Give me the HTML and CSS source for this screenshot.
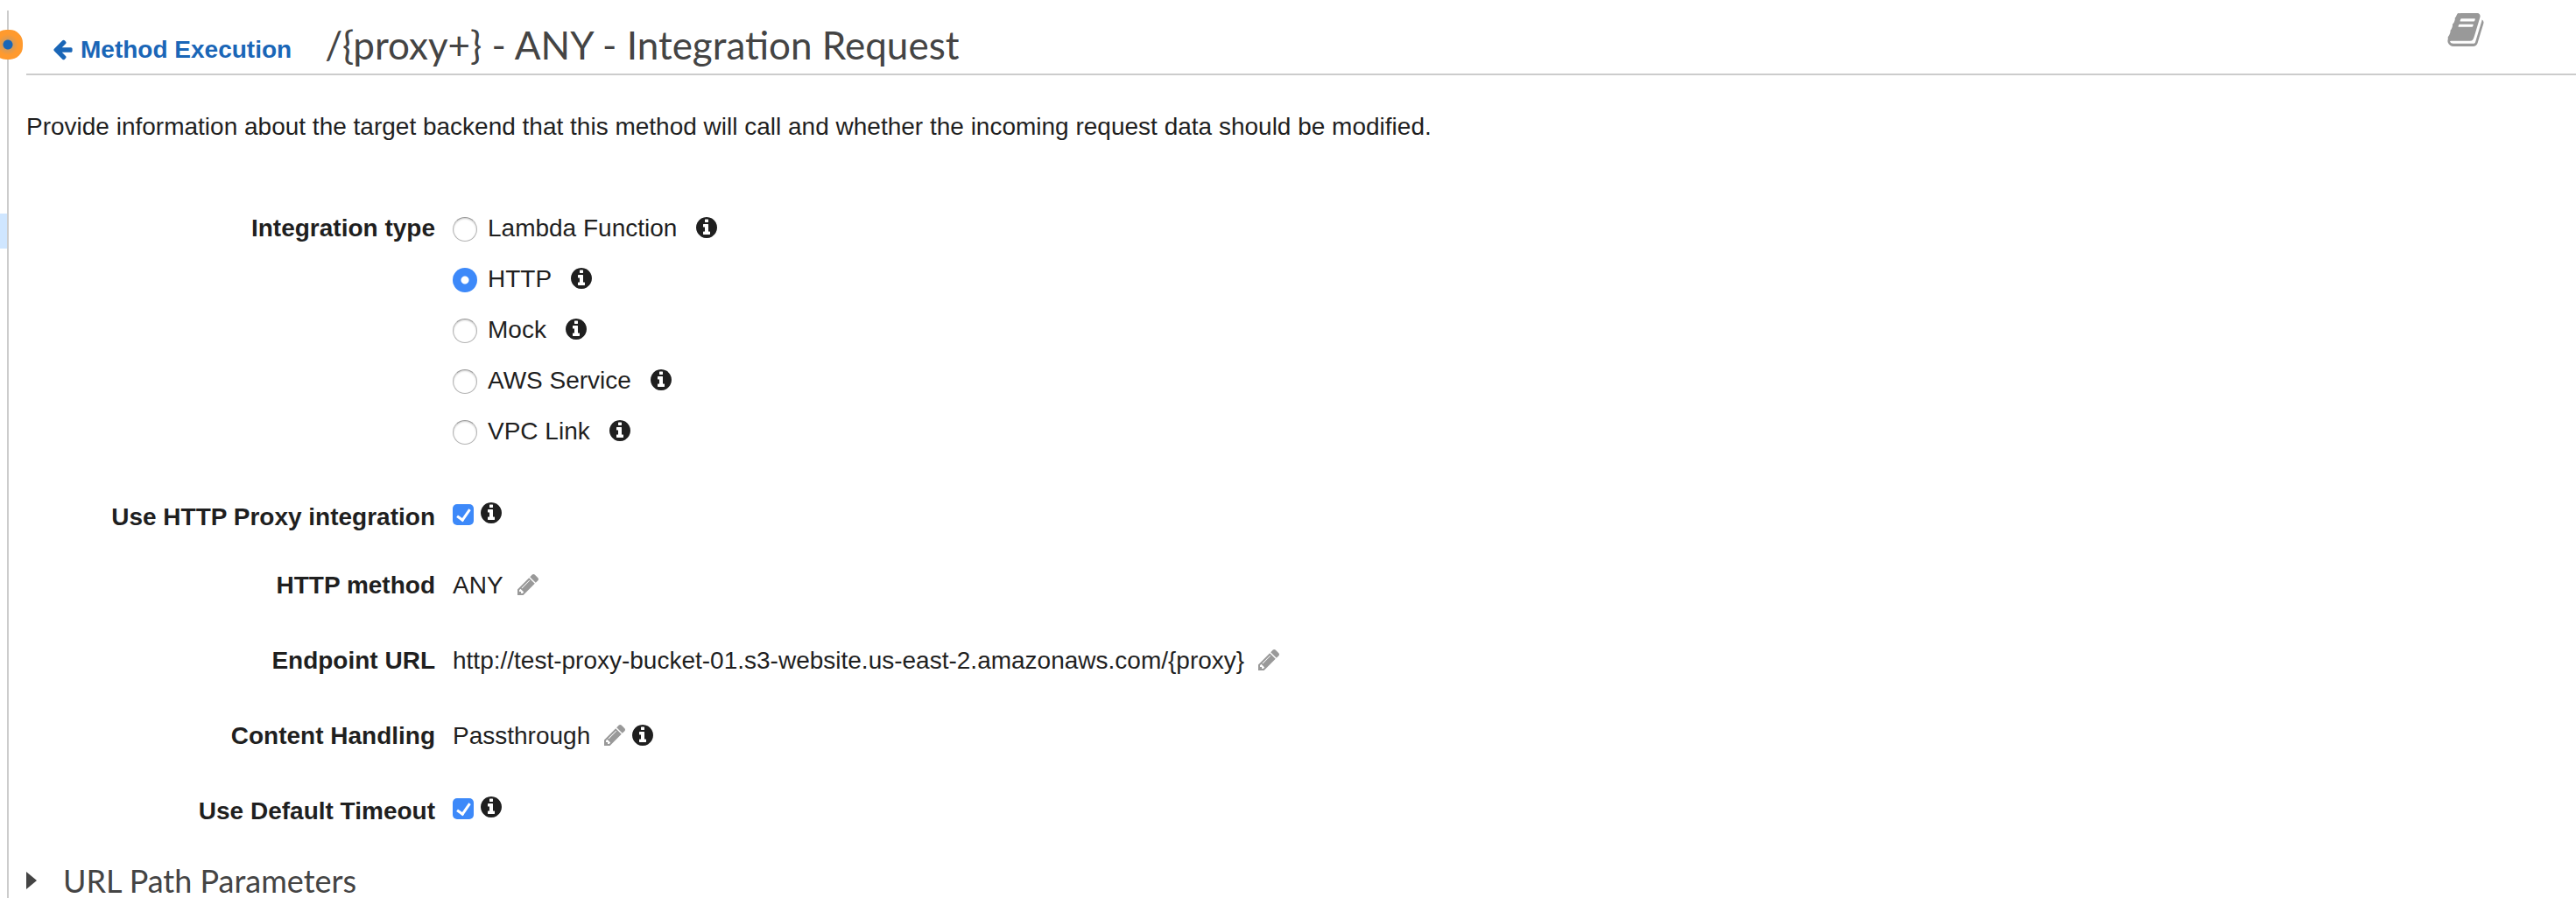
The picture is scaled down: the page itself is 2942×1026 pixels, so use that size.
FILE: index.html
```html
<!DOCTYPE html>
<html lang="en">
<head>
    <meta charset="utf-8">
    <title>Integration Request</title>
    <meta name="viewport" content="width=device-width, initial-scale=1.0">
    <link rel="stylesheet" href="styles.css">
</head>
<body>
    <!-- shared icons -->
    <svg class="sprite" aria-hidden="true">
        <symbol id="info" viewBox="128 128 1536 1536">
            <path d="M1152 1376v-160q0-14-9-23t-23-9h-96v-512q0-14-9-23t-23-9h-320q-14 0-23 9t-9 23v160q0 14 9 23t23 9h96v320h-96q-14 0-23 9t-9 23v160q0 14 9 23t23 9h448q14 0 23-9t9-23zm-128-896v-160q0-14-9-23t-23-9h-192q-14 0-23 9t-9 23v160q0 14 9 23t23 9h192q14 0 23-9t9-23zm640 416q0 209-103 385.5t-279.5 279.5-385.5 103-385.5-103-279.5-279.5-103-385.5 103-385.5 279.5-279.5 385.5-103 385.5 103 279.5 279.5 103 385.5z"/>
        </symbol>
        <symbol id="pencil" viewBox="128 149 1515 1515">
            <path d="M491 1536l91-91-235-235-91 91v107h128v128h107zm523-928q0-22-22-22-10 0-17 7l-542 542q-7 7-7 17 0 22 22 22 10 0 17-7l542-542q7-7 7-17zm-54-192l416 416-832 832h-416v-416zm683 96q0 53-37 90l-166 166-416-416 166-165q36-38 90-38 53 0 91 38l235 234q37 39 37 91z"/>
        </symbol>
    </svg>

    <aside class="sidebar">
        <div class="selected-resource"></div>
        <div class="resize-handle"></div>
    </aside>

    <main class="content">
        <header class="page-header">
            <a class="back-link" href="#">
                <svg class="icon" viewBox="160 128 1536 1664" aria-hidden="true"><path d="M1664 896v128q0 53-32.500 90.500t-84.500 37.500h-704l293 294q38 36 38 90t-38 90l-75 76q-37 37-90 37-52 0-91-37l-651-652q-37-37-37-90 0-52 37-91l651-650q38-38 91-38 52 0 90 38l75 74q38 38 38 91t-38 91l-293 293h704q52 0 84.500 37.500t32.500 90.500z"/></svg>
                Method Execution
            </a>
            <h1>/{proxy+} - ANY - Integration Request</h1>
            <button class="docs-btn" type="button" aria-label="Documentation">
                <svg viewBox="64 128 1666 1536"><path d="M1703 478q40 57 18 129l-275 906q-19 64-76.500 107.500t-122.500 43.500h-923q-77 0-148.500-53.500t-99.500-131.500q-24-67-2-127 0-4 3-27t4-37q1-8-3-21.500t-3-19.500q2-11 8-21t16.500-23.500 16.500-23.500q23-38 45-91.500t30-91.500q3-10 .5-30t-.5-28q3-11 17-28t17-23q21-36 42-92t25-90q1-9-2.500-32t.5-28q4-13 22-30.500t22-22.500q19-26 42.500-84.500t27.500-96.500q1-8-3-25.500t-2-26.500q2-8 9-18t18-23 17-21q8-12 16.500-30.500t15-35 16-36 19.500-32 26.500-23.500 36-11.500 47.500 5.500l-1 3q38-9 51-9h761q74 0 114 56t18 130l-274 906q-36 119-71.500 153.500t-128.500 34.500h-869q-27 0-38 15-11 16-1 43 24 70 144 70h923q29 0 56-15.500t35-41.500l300-987q7-22 5-57 38 15 59 43zm-1064 2q-4 13 2 22.500t20 9.500h608q13 0 25.500-9.500t16.500-22.500l21-64q4-13-2-22.500t-20-9.500h-608q-13 0-25.500 9.500t-16.500 22.500zm-83 256q-4 13 2 22.500t20 9.500h608q13 0 25.500-9.500t16.500-22.500l21-64q4-13-2-22.500t-20-9.500h-608q-13 0-25.500 9.500t-16.500 22.500z"/></svg>
            </button>
        </header>

        <p class="intro">Provide information about the target backend that this method will call and whether the incoming request data should be modified.</p>

        <form class="settings">
            <div class="row type-row" role="radiogroup" aria-labelledby="typeLabel">
                <span class="label" id="typeLabel">Integration type</span>
                <div class="options">
                    <div class="option">
                        <input type="radio" name="type" id="lambda">
                        <label for="lambda">Lambda Function</label>
                        <svg class="icon"><use href="#info"/></svg>
                    </div>
                    <div class="option">
                        <input type="radio" name="type" id="http" checked>
                        <label for="http">HTTP</label>
                        <svg class="icon"><use href="#info"/></svg>
                    </div>
                    <div class="option">
                        <input type="radio" name="type" id="mock">
                        <label for="mock">Mock</label>
                        <svg class="icon"><use href="#info"/></svg>
                    </div>
                    <div class="option">
                        <input type="radio" name="type" id="aws">
                        <label for="aws">AWS Service</label>
                        <svg class="icon"><use href="#info"/></svg>
                    </div>
                    <div class="option">
                        <input type="radio" name="type" id="vpc">
                        <label for="vpc">VPC Link</label>
                        <svg class="icon"><use href="#info"/></svg>
                    </div>
                </div>
            </div>

            <div class="row proxy-row">
                <label class="label" for="useProxy">Use HTTP Proxy integration</label>
                <div class="check">
                    <input type="checkbox" id="useProxy" checked>
                    <svg class="icon"><use href="#info"/></svg>
                </div>
            </div>

            <div class="row">
                <span class="label">HTTP method</span>
                <div class="value">
                    <span>ANY</span>
                    <button class="edit-btn" type="button" aria-label="Edit HTTP method"><svg class="icon"><use href="#pencil"/></svg></button>
                </div>
            </div>

            <div class="row">
                <span class="label">Endpoint URL</span>
                <div class="value">
                    <span>http://test-proxy-bucket-01.s3-website.us-east-2.amazonaws.com/{proxy}</span>
                    <button class="edit-btn" type="button" aria-label="Edit endpoint URL"><svg class="icon"><use href="#pencil"/></svg></button>
                </div>
            </div>

            <div class="row">
                <span class="label">Content Handling</span>
                <div class="value">
                    <span>Passthrough</span>
                    <button class="edit-btn" type="button" aria-label="Edit content handling"><svg class="icon"><use href="#pencil"/></svg></button>
                    <svg class="icon"><use href="#info"/></svg>
                </div>
            </div>

            <div class="row timeout-row">
                <label class="label" for="useTimeout">Use Default Timeout</label>
                <div class="check">
                    <input type="checkbox" id="useTimeout" checked>
                    <svg class="icon"><use href="#info"/></svg>
                </div>
            </div>
        </form>

        <button class="section-toggle" type="button" aria-expanded="false">
            <span class="caret"></span>
            URL Path Parameters
        </button>
    </main>
</body>
</html>
```
FILE: styles.css
```css
:root {
    --text: #1f1f1f;
    --heading: #444;
    --link: #1a66b7;
    --border: #ccc;
    --muted: #999;
    --control: #3d89f9;
    --selected: #cfe6ff;
    --handle: #ff9a2e;
}

* {
    margin: 0;
    padding: 0;
    box-sizing: border-box;
}

body {
    display: flex;
    min-height: 100vh;
    padding-top: 12px;
    background: #fff;
    color: var(--text);
    font-family: "Liberation Sans", Arial, sans-serif;
    font-size: 28px;
    line-height: 36px;
}

button {
    border: none;
    background: none;
    color: inherit;
    cursor: pointer;
}

.sprite {
    position: absolute;
    width: 0;
    height: 0;
}

.icon {
    display: block;
    flex: none;
    width: 24px;
    height: 24px;
    fill: currentColor;
}

/* edge of the resource tree */
.sidebar {
    position: relative;
    flex: none;
    width: 10px;
    padding-top: 232px;
    border-right: 2px solid var(--border);
}

.selected-resource {
    height: 40px;
    background: var(--selected);
}

.resize-handle {
    position: absolute;
    top: 22px;
    left: -8px;
    width: 34px;
    height: 34px;
    border-radius: 15px;
    background: radial-gradient(circle, var(--link) 5px, #d99a55 6px, var(--handle) 12px);
}

.content {
    flex: 1;
    min-width: 0;
    padding-left: 20px;
}

.page-header {
    display: flex;
    align-items: flex-start;
    height: 74px;
    padding-left: 30px;
    border-bottom: 2px solid var(--border);
}

.back-link {
    display: flex;
    align-items: center;
    gap: 8px;
    margin-top: 27px;
    color: var(--link);
    font-weight: bold;
    text-decoration: none;
}

h1 {
    margin-left: 38px;
    color: var(--heading);
    font-family: Lato, sans-serif;
    font-size: 44px;
    font-weight: 400;
    line-height: 78px;
}

.docs-btn {
    width: 42px;
    height: 38px;
    margin: 3px 105px 0 auto;
}

.docs-btn svg {
    display: block;
    width: 100%;
    height: 100%;
    fill: var(--muted);
}

.intro {
    margin-top: 41px;
}

.settings {
    margin-top: 80px;
}

.row {
    display: flex;
    align-items: flex-start;
    gap: 20px;
    margin-bottom: 50px;
}

.type-row {
    margin-bottom: 64px;
}

.proxy-row {
    margin-bottom: 42px;
}

.timeout-row {
    margin-bottom: 40px;
}

.label {
    flex: none;
    width: 467px;
    font-weight: bold;
    text-align: right;
}

.options {
    display: flex;
    flex-direction: column;
    gap: 24px;
}

.option,
.value {
    display: flex;
    align-items: center;
    height: 34px;
}

.option label,
.value span {
    padding-top: 2px;
}

.option label {
    margin: 0 22px 0 12px;
}

.value {
    gap: 8px;
}

.edit-btn {
    margin-left: 8px;
    color: var(--muted);
}

.check {
    display: flex;
    align-items: center;
    gap: 8px;
    height: 26px;
}

input {
    appearance: none;
    flex: none;
    margin-top: 4px;
}

input[type="radio"] {
    width: 28px;
    height: 28px;
    border: 1px solid #b4b4b4;
    border-top-color: #999;
    border-radius: 50%;
    background: #fff;
    box-shadow: inset 0 1px 2px rgba(0, 0, 0, 0.2);
}

input[type="radio"]:checked {
    border: none;
    background: radial-gradient(circle, #fff 4px, var(--control) 5px);
    box-shadow: none;
}

input[type="checkbox"] {
    position: relative;
    width: 24px;
    height: 24px;
    border-radius: 5px;
    background: var(--control);
}

input[type="checkbox"]:checked::after {
    content: "";
    position: absolute;
    top: 3px;
    left: 8px;
    box-sizing: border-box;
    width: 9px;
    height: 16px;
    border: solid #fff;
    border-width: 0 3px 3px 0;
    transform: rotate(35deg);
}

.section-toggle {
    display: flex;
    align-items: center;
    gap: 30px;
    color: var(--heading);
    font-family: Lato, sans-serif;
    font-size: 36px;
    line-height: 42px;
}

.caret {
    border: solid transparent;
    border-width: 10px 0 10px 12px;
    border-left-color: var(--heading);
}
```
